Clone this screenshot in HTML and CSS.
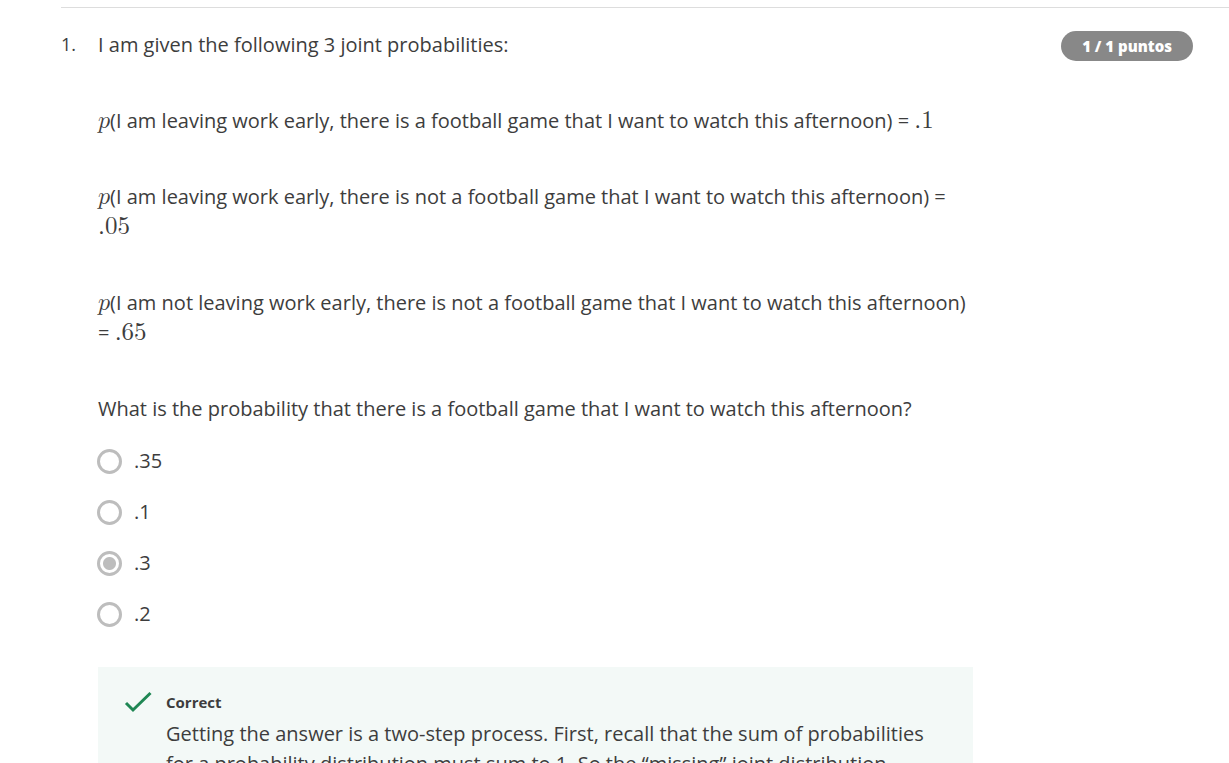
FILE: index.html
```html
<!DOCTYPE html>
<html lang="en">
<head>
<meta charset="utf-8">
<meta name="viewport" content="width=device-width, initial-scale=1">
<title>Quiz</title>
<link rel="stylesheet" href="styles.css">
</head>
<body>
<main class="quiz">
  <section class="question">
    <div class="number">1.</div>
    <div class="content">
      <div class="prompt" id="prompt">
        <p>I am given the following 3 joint probabilities:</p>
        <p><math class="variable"><mi>p</mi></math>(I am leaving work early, there is a football game that I want to watch this afternoon) = <span class="value">.1</span></p>
        <p><math class="variable"><mi>p</mi></math>(I am leaving work early, there is not a football game that I want to watch this afternoon) = <span class="value">.05</span></p>
        <p><math class="variable"><mi>p</mi></math>(I am not leaving work early, there is not a football game that I want to watch this afternoon) = <span class="value">.65</span></p>
        <p>What is the probability that there is a football game that I want to watch this afternoon?</p>
      </div>
      <div class="options" role="radiogroup" aria-labelledby="prompt">
        <label class="option"><input type="radio" name="answer"><span>.35</span></label>
        <label class="option"><input type="radio" name="answer"><span>.1</span></label>
        <label class="option"><input type="radio" name="answer" checked><span>.3</span></label>
        <label class="option"><input type="radio" name="answer"><span>.2</span></label>
      </div>
      <div class="feedback">
        <svg class="check" viewBox="0 0 28 22" aria-hidden="true"><path d="M2 12l7 7L26.500 2" fill="none" stroke="#1f8754" stroke-width="3"/></svg>
        <div>
          <h2>Correct</h2>
          <p>Getting the answer is a two-step process. First, recall that the sum of probabilities for a probability distribution must sum to 1. So the “missing” joint distribution</p>
        </div>
      </div>
    </div>
    <div class="points">1 / 1 puntos</div>
  </section>
</main>
</body>
</html>
```
FILE: styles.css
```css
* { box-sizing: border-box; }
html { height: 100%; overflow: hidden; }
body {
  margin: 0;
  height: 100%;
  overflow: hidden;
  background: #fff;
  color: #3d3d3d;
  font-family: "Open Sans", "Noto Sans", sans-serif;
  font-size: 20px;
  line-height: 30px;
}
p, h2 { margin: 0; }
.quiz { padding: 7px 0 0 61px; }
.question {
  display: flex;
  align-items: flex-start;
  border-top: 1px solid #ddd;
  padding: 22px 36px 0 0;
}
.number { flex: 0 0 37px; font-size: 18px; line-height: 28px; }
.content { flex: 1 1 0; max-width: 875px; }
.prompt { display: flex; flex-direction: column; gap: 46px; }
.variable { font-family: "Latin Modern Math", math, serif; font-size: 24px; line-height: 0; }
.value { font-family: "Latin Modern Roman", "Latin Modern Math", "Liberation Serif", serif; font-size: 25px; line-height: 0; }
.options { display: flex; flex-direction: column; gap: 21px; margin: 22px 0 0 -1px; }
.option { display: flex; align-items: center; gap: 12px; }
.option input {
  appearance: none;
  flex: none;
  width: 25px;
  height: 25px;
  margin: 0;
  border: 3px solid #bdbdbd;
  border-radius: 50%;
}
.option input:checked { background: radial-gradient(circle, #bdbdbd 6px, transparent 7px); }
.feedback {
  display: flex;
  gap: 14px;
  margin-top: 38px;
  padding: 21px 36px 24px 26px;
  background: #f3f9f7;
}
.check { flex: none; width: 28px; height: 22px; margin-top: 3px; }
.feedback h2 { margin-bottom: 3px; font-size: 15px; line-height: 28px; }
.points {
  margin: 1px 0 0 auto;
  padding: 0 21px;
  border-radius: 15px;
  background: #888;
  color: #fff;
  font-size: 15px;
  font-weight: 800;
}
```
